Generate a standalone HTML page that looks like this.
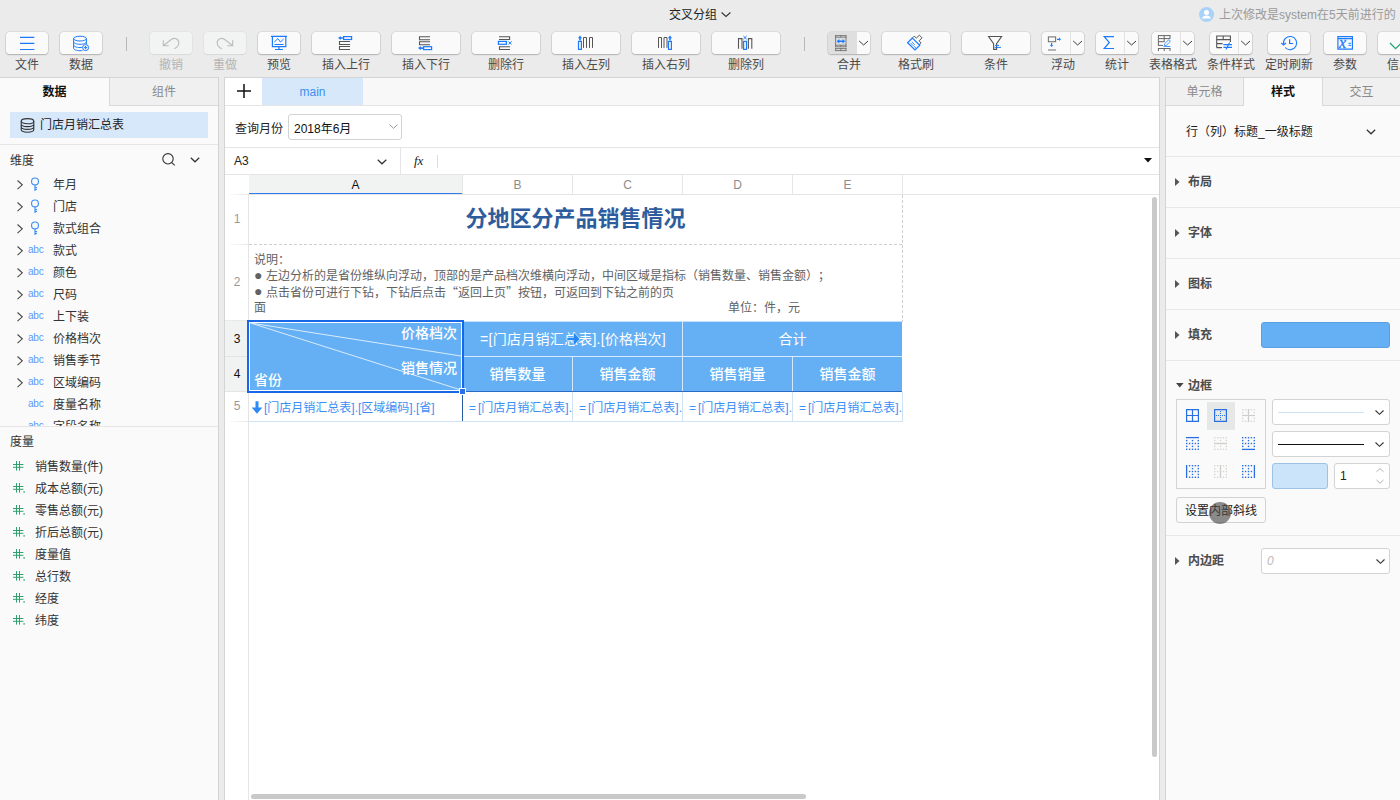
<!DOCTYPE html>
<html lang="zh-CN">
<head>
<meta charset="utf-8">
<title>交叉分组</title>
<style>
*{box-sizing:border-box;margin:0;padding:0}
html,body{width:1400px;height:800px;overflow:hidden}
body{position:relative;text-spacing-trim:space-all;background:#ebebeb;font-family:"Liberation Sans","Noto Sans CJK SC",sans-serif;font-size:12px;color:#333;line-height:16px}
.a{position:absolute}
.t{position:absolute;white-space:nowrap;line-height:16px;height:16px}
.c{text-align:center}
svg{position:absolute;overflow:visible}
/* toolbar */
.btn{position:absolute;top:32px;height:22px;background:#fafafa;border-radius:3.5px;box-shadow:0 0 0 .6px rgba(0,0,0,.11),0 1px 1.5px rgba(0,0,0,.2)}
.btn.dis{background:#f2f3f3;box-shadow:0 0 0 .6px rgba(0,0,0,.05),0 1px 1px rgba(0,0,0,.06)}
.lbl{position:absolute;top:57px;height:16px;line-height:16px;text-align:center;white-space:nowrap;color:#4a4a4a}
.lbl.dis{color:#b4b4b4}
.sep{position:absolute;top:37px;width:1px;height:14px;background:#b8b8b8}
.dd{position:absolute;top:0;right:0;width:14px;height:22px;border-left:1px solid #e3e3e3}
/* panels */
#left{left:0;top:77px;width:219px;height:723px;background:#fafafa;border-top:1px solid #d4d4d4;border-right:1px solid #d4d4d4}
#center{left:224px;top:77px;width:936px;height:723px;background:#fff;border:1px solid #d4d4d4;border-bottom:0}
#right{left:1165px;top:77px;width:235px;height:723px;background:#fafafa;border-top:1px solid #d4d4d4;border-left:1px solid #d4d4d4}
.tab{position:absolute;top:0;height:28px;line-height:29px;text-align:center;background:#f0f0f0;border-bottom:1px solid #d9d9d9;color:#8a8a8a}
.tab.on{background:#fafafa;border-bottom:0;color:#111;font-weight:bold}
.hl{position:absolute;height:1px;background:#e6e6e6}
.vl{position:absolute;width:1px;background:#e6e6e6}
.ti{position:absolute;left:0;width:218px;height:22px}
.ti .nm{position:absolute;left:53px;top:4px;line-height:16px;color:#333;white-space:nowrap}
.ti .abc{position:absolute;left:28px;top:3px;line-height:16px;color:#5b9bff;font-size:10px;letter-spacing:-0.2px}
.mi{position:absolute;left:0;width:218px;height:22px}
.mi .nm{position:absolute;left:35px;top:4px;line-height:16px;color:#333;white-space:nowrap}
.mi .hs{position:absolute;left:13px;top:3px;line-height:16px;color:#2e9e6b;white-space:nowrap}
.sec{position:absolute;left:22px;font-weight:bold;color:#4c4c4c;line-height:16px;height:16px;white-space:nowrap}
.hw{color:#fff;font-weight:500;font-size:14px;line-height:18px;height:18px;text-align:center;white-space:nowrap;position:absolute}
.f5{position:absolute;top:314px;height:30px;line-height:30px;color:#3d8ff2;white-space:nowrap;overflow:hidden}
.nt{color:#626262}
.bul{display:inline-block;width:12px;height:16px;vertical-align:top;font-size:14px;line-height:15px}
.sel{position:absolute;background:#fff;border:1px solid #d3d3d3;border-radius:3px}
</style>
</head>
<body>
<!-- ===== title bar ===== -->
<div class="t" style="left:669px;top:7px;color:#222">交叉分组</div>
<svg style="left:721px;top:12px" width="10" height="5" viewBox="0 0 10 5"><path d="M0.6 0.5 L5 4.4 L9.4 0.5" fill="none" stroke="#333" stroke-width="1.1"/></svg>
<svg style="left:1199px;top:7px" width="15" height="15" viewBox="0 0 15 15"><circle cx="7.5" cy="7.5" r="7.5" fill="#a9d2f9"/><circle cx="7.5" cy="5.6" r="2.5" fill="#fff"/><path d="M3 11.6 C3.4 9.3 5.5 8.4 7.5 8.4 C9.5 8.4 11.6 9.3 12 11.6 Z" fill="#fff"/></svg>
<div class="t" style="left:1219px;top:7px;color:#9a9a9a">上次修改是system在5天前进行的</div>

<!-- ===== toolbar buttons ===== -->
<div class="btn" style="left:6px;width:42px"></div><div class="lbl" style="left:6px;width:42px">文件</div>
<div class="btn" style="left:60px;width:42px"></div><div class="lbl" style="left:60px;width:42px">数据</div>
<div class="sep" style="left:126px"></div>
<div class="btn dis" style="left:150px;width:42px"></div><div class="lbl dis" style="left:150px;width:42px">撤销</div>
<div class="btn dis" style="left:204px;width:42px"></div><div class="lbl dis" style="left:204px;width:42px">重做</div>
<div class="btn" style="left:258px;width:42px"></div><div class="lbl" style="left:258px;width:42px">预览</div>
<div class="btn" style="left:312px;width:68px"></div><div class="lbl" style="left:312px;width:68px">插入上行</div>
<div class="btn" style="left:392px;width:68px"></div><div class="lbl" style="left:392px;width:68px">插入下行</div>
<div class="btn" style="left:472px;width:68px"></div><div class="lbl" style="left:472px;width:68px">删除行</div>
<div class="btn" style="left:552px;width:68px"></div><div class="lbl" style="left:552px;width:68px">插入左列</div>
<div class="btn" style="left:632px;width:68px"></div><div class="lbl" style="left:632px;width:68px">插入右列</div>
<div class="btn" style="left:712px;width:68px"></div><div class="lbl" style="left:712px;width:68px">删除列</div>
<div class="sep" style="left:804px"></div>
<div class="btn" style="left:828px;width:42px;background:linear-gradient(90deg,#dfdfdf 0,#dfdfdf 29px,#fafafa 29px)"></div><div class="lbl" style="left:828px;width:42px">合并</div>
<div class="btn" style="left:882px;width:68px"></div><div class="lbl" style="left:882px;width:68px">格式刷</div>
<div class="btn" style="left:962px;width:68px"></div><div class="lbl" style="left:962px;width:68px">条件</div>
<div class="btn" style="left:1042px;width:42px"><div class="dd"></div></div><div class="lbl" style="left:1042px;width:42px">浮动</div>
<div class="btn" style="left:1096px;width:42px"><div class="dd"></div></div><div class="lbl" style="left:1096px;width:42px">统计</div>
<div class="btn" style="left:1152px;width:42px"><div class="dd"></div></div><div class="lbl" style="left:1143px;width:60px">表格格式</div>
<div class="btn" style="left:1210px;width:42px"><div class="dd"></div></div><div class="lbl" style="left:1201px;width:60px">条件样式</div>
<div class="btn" style="left:1268px;width:42px"></div><div class="lbl" style="left:1259px;width:60px">定时刷新</div>
<div class="btn" style="left:1324px;width:42px"></div><div class="lbl" style="left:1324px;width:42px">参数</div>
<div class="btn" style="left:1378px;width:42px"></div><div class="lbl" style="left:1387px;width:24px">信息</div>
<!-- toolbar icons, drawn in page coordinates -->
<svg style="left:0;top:0" width="1400" height="80" viewBox="0 0 1400 80" fill="none" stroke-linecap="butt">
<g stroke="#1a7bff" stroke-width="1.2">
 <!-- file -->
 <path d="M20 37.3H34.3M20 43.3H34.3M20 49.5H34.3"/>
 <!-- data -->
 <ellipse cx="80" cy="38.6" rx="6.4" ry="2.4" stroke-width="1"/>
 <path stroke-width="1" d="M73.6 38.6V48.2C73.6 49.6 76.3 50.7 80 50.7C81 50.7 81.8 50.6 82.5 50.5M86.4 38.6V44"/>
 <path stroke-width="1" d="M73.6 41.8C73.6 43.2 76.3 44.3 80 44.3C83.7 44.3 86.4 43.2 86.4 41.8M73.6 45C73.6 46.4 76.3 47.5 80 47.5C80.8 47.5 81.6 47.4 82.3 47.3"/>
 <circle cx="85.6" cy="47.6" r="3" fill="#fafafa" stroke-width="1"/>
 <path d="M84 47.6H87.2M85.6 46V49.2" stroke-width="1"/>
 <!-- preview -->
 <path d="M271 36.3H287M272.4 36.3V46.6H285.8V36.3M274.5 44.5H283.5M279 46.6V49.4M275 49.5H283"/>
 <path d="M274.3 42L277.8 38.6L280.5 42L283.6 39" stroke-width="1"/>
 <!-- sigma -->
 <path d="M1114 36.6H1104.2L1109.3 42.5L1104.2 48.5H1114"/>
 <!-- timer refresh -->
 <path d="M1283.6 44.2A6.6 6.6 0 1 1 1285.2 47.5" stroke-width="1.1"/>
 <path d="M1281.2 43L1283.6 45L1286 43" stroke-width="1.1"/>
 <path d="M1289.6 39.2V43.5H1293.2"/>
 <!-- param -->
 <path d="M1337.9 36.6H1352.4V49.2H1337.9ZM1337.9 38.6H1352.4"/>
 <path d="M1348.5 43.3H1351M1348.5 45.4H1351" stroke-width="1"/>
</g>
<text x="1339" y="47.8" font-family="Liberation Serif,serif" font-style="italic" font-size="16" fill="#1a7bff" stroke="#1a7bff" stroke-width=".3">x</text>
<!-- undo / redo -->
<g stroke="#bcbcbc" stroke-width="1.1">
 <path d="M163.3 40.2V45.7H168.8M163.5 45.5L171.6 39.2C174.5 37.4 178.8 38.6 178.8 43C178.8 45.5 176.6 47.6 174.2 48.7"/>
 <path d="M232.7 40.2V45.7H227.2M232.5 45.5L224.4 39.2C221.5 37.4 217.2 38.6 217.2 43C217.2 45.5 219.4 47.6 221.8 48.7"/>
</g>
<!-- insert row above -->
<g stroke="#555" stroke-width="1.1">
 <path d="M350 41.5H339.5V44.5H350M350 46.5H339.5V49.5H350"/>
 <path d="M430 36.7H419.5V39.7H430M430 41.7H419.5V44.7H430"/>
 <path d="M499 36.7H509.6V39.5H499M510 46.7H499.5V49.5H510"/>
 <path d="M583.5 47.9V37.5H586.5V47.9M589.5 47.9V37.5H592.5V47.9" stroke-width="1"/>
 <path d="M658.5 47.9V37.5H661.5V47.9M664 47.9V37.5H667V47.9" stroke-width="1"/>
 <path d="M738.5 48.8V38.6H742V48.8M748.4 48.8V38.6H751.8V48.8"/>
</g>
<g stroke="#1a7bff" stroke-width="1.2">
 <rect x="343.6" y="36.6" width="8" height="2.9"/>
 <rect x="423.6" y="46.7" width="8" height="2.9"/>
 <rect x="498.4" y="41.4" width="8" height="2.9"/>
 <rect x="578.5" y="41.4" width="2.9" height="8"/>
 <rect x="668.5" y="41.4" width="2.9" height="8"/>
 <rect x="743.6" y="41.4" width="2.9" height="8"/>
 <path d="M508.4 41.3L511.6 44.5M511.6 41.3L508.4 44.5M743.4 36L746.6 39.2M746.6 36L743.4 39.2" stroke-width="1"/>
</g>
<g fill="#1a7bff" stroke="none">
 <path d="M338.1 38L340.7 35.9V37.2H342.9V38.8H340.7V40.1Z"/>
 <path d="M418.1 48.1L420.7 46V47.3H422.9V48.9H420.7V50.2Z"/>
 <path d="M580 35.6L582.1 38.2H580.8V40.4H579.2V38.2H577.9Z"/>
 <path d="M670 35.6L672.1 38.2H670.8V40.4H669.2V38.2H667.9Z"/>
</g>
<!-- merge -->
<g stroke="#6a6a6a" stroke-width=".85">
 <path d="M835.2 35.6H846.4M835.2 37.2H846.4M835.2 45.2H846.4M835.2 46.8H846.4M835.2 48.6H846.4M835.2 50.6H846.4M835.6 35.2V47.2M846 35.2V47.2M835.6 48.2V51M846 48.2V51M840.8 35.2V37.2M840.8 45.2V46.8M840.8 48.2V51"/>
</g>
<path d="M836.6 41.3L839.3 39V40.6H842.5V39L845.2 41.3L842.5 43.6V42H839.3V43.6Z" fill="#1a7bff"/>
<!-- dropdown chevrons -->
<g stroke="#3c3c3c" stroke-width="1">
 <path d="M859.2 41L863.6 45L868 41"/>
 <path d="M1073.2 41L1077.6 45L1082 41"/>
 <path d="M1127.2 41L1131.6 45L1136 41"/>
 <path d="M1183.2 41L1187.6 45L1192 41"/>
 <path d="M1241.2 41L1245.6 45L1250 41"/>
</g>
<!-- format brush -->
<path d="M912.4 38L907.6 42.8L915 50L919.8 45.2Z" stroke="#1a7bff" stroke-width="1.2"/>
<path d="M910.6 43L913.4 45.8M911.8 41.8L914.8 44.8M913.8 46L916 48.2" stroke="#1a7bff" stroke-width=".8"/>
<path d="M912.6 37.8L914.2 36.2L916.4 38L919.4 35.2L922 37.8L919.2 40.8L920.8 42.8L919.6 44.6" stroke="#555" stroke-width="1"/>
<!-- filter -->
<path d="M988.6 36.5H1001.6L996.6 43.6V49.4H993.6V43.6Z" stroke="#555" stroke-width="1.1"/>
<path d="M995 45.4H999M994.6 47.4H1001" stroke="#1a7bff" stroke-width="1"/>
<!-- float -->
<rect x="1048.4" y="36.9" width="7.2" height="4.8" stroke="#777" stroke-width="1.1"/>
<path d="M1048 50H1056" stroke="#888" stroke-width="1.2"/>
<g fill="#1a7bff" stroke="none">
 <path d="M1061 39.3L1059 37.6V38.7H1057V39.9H1059V41Z"/>
 <path d="M1051.6 47L1049.9 45H1051V43H1052.2V45H1053.3Z"/>
</g>
<!-- table format -->
<g stroke="#666" stroke-width="1">
 <path d="M1158 35.6H1170.5M1158.4 38.6H1170M1158.4 41.7H1164.4M1158.4 45.4H1163M1158.4 35.5V45.9M1164.2 35.5V41.7M1170 35.5V38.9M1158 48.5H1170.5M1158.4 48.4V51M1164.2 48.4V51M1170 48.4V51"/>
</g>
<path d="M1164.3 45.5L1164.7 43.7L1168.1 40.3A1.15 1.15 0 0 1 1169.8 41.9L1166.3 45.3ZM1163.6 46.5H1170.4" stroke="#4a9bff" stroke-width="1"/>
<!-- cond style -->
<g stroke="#555" stroke-width="1.1">
 <path d="M1216.5 36H1230.6M1216.5 39.6H1230.6M1216.5 43.6H1222.6M1216.5 47.6H1222M1216.7 35.5V47.6M1223.2 36V39.6M1230.4 35.5V42"/>
</g>
<path d="M1223.4 44.6H1232M1223.4 47.4H1232M1229.6 42.6L1226 49.6" stroke="#1a7bff" stroke-width="1.1"/>
<!-- info check -->
<path d="M1390 43L1395.6 48.6L1402 42.4" stroke="#1fa37a" stroke-width="1.3"/>
</svg>

<!-- ===== left panel ===== -->
<div id="left" class="a">
 <div class="tab on" style="left:0;width:110px;border-right:1px solid #d9d9d9">数据</div>
 <div class="tab" style="left:110px;width:108px">组件</div>
 <div class="a" style="left:10px;top:34px;width:198px;height:26px;background:#d8e8fb"></div>
 <svg style="left:20px;top:40px" width="15" height="15" viewBox="0 0 15 15" fill="none" stroke="#333" stroke-width="1.1"><ellipse cx="7.5" cy="3.2" rx="6.3" ry="2.6"/><path d="M1.2 3.2V11.6C1.2 13 4 14.2 7.5 14.2C11 14.2 13.8 13 13.8 11.6V3.2M1.2 6C1.2 7.4 4 8.6 7.5 8.6C11 8.6 13.8 7.4 13.8 6M1.2 8.8C1.2 10.2 4 11.4 7.5 11.4C11 11.4 13.8 10.2 13.8 8.8"/></svg>
 <div class="t" style="left:40px;top:39px;color:#222">门店月销汇总表</div>
 <div class="hl" style="left:0;top:66px;width:218px"></div>
 <div class="t" style="left:10px;top:75px;color:#333">维度</div>
 <svg style="left:162px;top:75px" width="14" height="13" viewBox="0 0 14 13" fill="none" stroke="#333" stroke-width="1.1"><circle cx="6" cy="5.8" r="5.2"/><path d="M9.8 9.6L12.8 12.4"/></svg>
 <svg style="left:190px;top:79px" width="10" height="6" viewBox="0 0 10 6"><path d="M0.8 0.8L5 4.8L9.2 0.8" fill="none" stroke="#333" stroke-width="1.2"/></svg>
 <div class="a" style="left:0;top:94px;width:218px;height:254px;overflow:hidden">
  <div class="ti" style="top:1px"><svg style="left:17px;top:7px" width="6" height="10" viewBox="0 0 6 10"><path d="M0.5 0.5L5.3 4.8L0.5 9.1" fill="none" stroke="#444" stroke-width="1.05"/></svg><svg style="left:30px;top:4px" width="10" height="15" viewBox="0 0 10 15" fill="none" stroke="#3d8ff5" stroke-width="1.15"><circle cx="5" cy="4.4" r="3.45"/><path d="M5 7.9V14M5 10.5H7M5 12.4H7"/></svg><span class="nm">年月</span></div>
  <div class="ti" style="top:23px"><svg style="left:17px;top:7px" width="6" height="10" viewBox="0 0 6 10"><path d="M0.5 0.5L5.3 4.8L0.5 9.1" fill="none" stroke="#444" stroke-width="1.05"/></svg><svg style="left:30px;top:4px" width="10" height="15" viewBox="0 0 10 15" fill="none" stroke="#3d8ff5" stroke-width="1.15"><circle cx="5" cy="4.4" r="3.45"/><path d="M5 7.9V14M5 10.5H7M5 12.4H7"/></svg><span class="nm">门店</span></div>
  <div class="ti" style="top:45px"><svg style="left:17px;top:7px" width="6" height="10" viewBox="0 0 6 10"><path d="M0.5 0.5L5.3 4.8L0.5 9.1" fill="none" stroke="#444" stroke-width="1.05"/></svg><svg style="left:30px;top:4px" width="10" height="15" viewBox="0 0 10 15" fill="none" stroke="#3d8ff5" stroke-width="1.15"><circle cx="5" cy="4.4" r="3.45"/><path d="M5 7.9V14M5 10.5H7M5 12.4H7"/></svg><span class="nm">款式组合</span></div>
  <div class="ti" style="top:67px"><svg style="left:17px;top:7px" width="6" height="10" viewBox="0 0 6 10"><path d="M0.5 0.5L5.3 4.8L0.5 9.1" fill="none" stroke="#444" stroke-width="1.05"/></svg><span class="abc">abc</span><span class="nm">款式</span></div>
  <div class="ti" style="top:89px"><svg style="left:17px;top:7px" width="6" height="10" viewBox="0 0 6 10"><path d="M0.5 0.5L5.3 4.8L0.5 9.1" fill="none" stroke="#444" stroke-width="1.05"/></svg><span class="abc">abc</span><span class="nm">颜色</span></div>
  <div class="ti" style="top:111px"><svg style="left:17px;top:7px" width="6" height="10" viewBox="0 0 6 10"><path d="M0.5 0.5L5.3 4.8L0.5 9.1" fill="none" stroke="#444" stroke-width="1.05"/></svg><span class="abc">abc</span><span class="nm">尺码</span></div>
  <div class="ti" style="top:133px"><svg style="left:17px;top:7px" width="6" height="10" viewBox="0 0 6 10"><path d="M0.5 0.5L5.3 4.8L0.5 9.1" fill="none" stroke="#444" stroke-width="1.05"/></svg><span class="abc">abc</span><span class="nm">上下装</span></div>
  <div class="ti" style="top:155px"><svg style="left:17px;top:7px" width="6" height="10" viewBox="0 0 6 10"><path d="M0.5 0.5L5.3 4.8L0.5 9.1" fill="none" stroke="#444" stroke-width="1.05"/></svg><span class="abc">abc</span><span class="nm">价格档次</span></div>
  <div class="ti" style="top:177px"><svg style="left:17px;top:7px" width="6" height="10" viewBox="0 0 6 10"><path d="M0.5 0.5L5.3 4.8L0.5 9.1" fill="none" stroke="#444" stroke-width="1.05"/></svg><span class="abc">abc</span><span class="nm">销售季节</span></div>
  <div class="ti" style="top:199px"><svg style="left:17px;top:7px" width="6" height="10" viewBox="0 0 6 10"><path d="M0.5 0.5L5.3 4.8L0.5 9.1" fill="none" stroke="#444" stroke-width="1.05"/></svg><span class="abc">abc</span><span class="nm">区域编码</span></div>
  <div class="ti" style="top:221px"><span class="abc">abc</span><span class="nm">度量名称</span></div>
  <div class="ti" style="top:243px"><span class="abc">abc</span><span class="nm">字段名称</span></div>
 </div>
 <div class="hl" style="left:0;top:348px;width:218px"></div>
 <div class="t" style="left:10px;top:356px;color:#333">度量</div>
 <div class="mi" style="top:377px"><svg style="left:13px;top:6px" width="13" height="10" viewBox="0 0 13 10"><path d="M0 3.5H10.4M0 6.3H10.4M3.5 0V9.6M6.5 0V9.6" fill="none" stroke="#2fa06e" stroke-width="1"/></svg><span class="nm">销售数量(件)</span></div>
 <div class="mi" style="top:399px"><svg style="left:13px;top:6px" width="13" height="10" viewBox="0 0 13 10"><path d="M0 3.5H10.4M0 6.3H10.4M3.5 0V9.6M6.5 0V9.6" fill="none" stroke="#2fa06e" stroke-width="1"/><rect x="10.4" y="8.2" width="1.4" height="1.4" fill="#2fa06e"/></svg><span class="nm">成本总额(元)</span></div>
 <div class="mi" style="top:421px"><svg style="left:13px;top:6px" width="13" height="10" viewBox="0 0 13 10"><path d="M0 3.5H10.4M0 6.3H10.4M3.5 0V9.6M6.5 0V9.6" fill="none" stroke="#2fa06e" stroke-width="1"/><rect x="10.4" y="8.2" width="1.4" height="1.4" fill="#2fa06e"/></svg><span class="nm">零售总额(元)</span></div>
 <div class="mi" style="top:443px"><svg style="left:13px;top:6px" width="13" height="10" viewBox="0 0 13 10"><path d="M0 3.5H10.4M0 6.3H10.4M3.5 0V9.6M6.5 0V9.6" fill="none" stroke="#2fa06e" stroke-width="1"/><rect x="10.4" y="8.2" width="1.4" height="1.4" fill="#2fa06e"/></svg><span class="nm">折后总额(元)</span></div>
 <div class="mi" style="top:465px"><svg style="left:13px;top:6px" width="13" height="10" viewBox="0 0 13 10"><path d="M0 3.5H10.4M0 6.3H10.4M3.5 0V9.6M6.5 0V9.6" fill="none" stroke="#2fa06e" stroke-width="1"/><rect x="10.4" y="8.2" width="1.4" height="1.4" fill="#2fa06e"/></svg><span class="nm">度量值</span></div>
 <div class="mi" style="top:487px"><svg style="left:13px;top:6px" width="13" height="10" viewBox="0 0 13 10"><path d="M0 3.5H10.4M0 6.3H10.4M3.5 0V9.6M6.5 0V9.6" fill="none" stroke="#2fa06e" stroke-width="1"/><rect x="10.4" y="8.2" width="1.4" height="1.4" fill="#2fa06e"/></svg><span class="nm">总行数</span></div>
 <div class="mi" style="top:509px"><svg style="left:13px;top:6px" width="13" height="10" viewBox="0 0 13 10"><path d="M0 3.5H10.4M0 6.3H10.4M3.5 0V9.6M6.5 0V9.6" fill="none" stroke="#2fa06e" stroke-width="1"/><rect x="10.4" y="8.2" width="1.4" height="1.4" fill="#2fa06e"/></svg><span class="nm">经度</span></div>
 <div class="mi" style="top:531px"><svg style="left:13px;top:6px" width="13" height="10" viewBox="0 0 13 10"><path d="M0 3.5H10.4M0 6.3H10.4M3.5 0V9.6M6.5 0V9.6" fill="none" stroke="#2fa06e" stroke-width="1"/><rect x="10.4" y="8.2" width="1.4" height="1.4" fill="#2fa06e"/></svg><span class="nm">纬度</span></div>
</div>
<!-- ===== center panel (children in page coordinates) ===== -->
<div id="center" class="a"></div>
<div class="a" style="left:225px;top:78px;width:934px;height:27px;background:#f8f8f8"></div>
<div class="a" style="left:225px;top:78px;width:37px;height:27px;background:#fff"></div>
<svg style="left:237px;top:84px" width="14" height="14" viewBox="0 0 14 14"><path d="M0 7H14M7 0V14" stroke="#111" stroke-width="1.5" fill="none"/></svg>
<div class="a c" style="left:262px;top:78px;width:101px;height:27px;line-height:29px;background:#d8e8fb;color:#3d8ff2">main</div>
<div class="hl" style="left:225px;top:105px;width:934px;background:#e5e5e5"></div>
<div class="t" style="left:235px;top:121px;color:#222">查询月份</div>
<div class="sel" style="left:288px;top:114px;width:114px;height:26px"></div>
<div class="t" style="left:294px;top:121px;color:#111">2018年6月</div>
<svg style="left:389px;top:124px" width="9" height="5" viewBox="0 0 9 5"><path d="M0.5 0.5L4.5 4.3L8.5 0.5" fill="none" stroke="#999" stroke-width="1"/></svg>
<div class="hl" style="left:225px;top:147px;width:934px;background:#e5e5e5"></div>
<div class="t" style="left:234px;top:153px;color:#222">A3</div>
<svg style="left:377px;top:159px" width="10" height="6" viewBox="0 0 10 6"><path d="M0.7 0.7L5 4.8L9.3 0.7" fill="none" stroke="#333" stroke-width="1.2"/></svg>
<div class="vl" style="left:400px;top:148px;height:26px;background:#e5e5e5"></div>
<div class="t" style="left:414px;top:153px;font-family:'Liberation Serif',serif;font-style:italic;font-size:13px;color:#222">fx</div>
<div class="vl" style="left:437px;top:155px;height:13px;background:#dcdcdc"></div>
<svg style="left:1144px;top:158px" width="8" height="5" viewBox="0 0 8 5"><path d="M0 0H8L4 4.6Z" fill="#111"/></svg>
<div class="hl" style="left:225px;top:174px;width:934px;background:#e5e5e5"></div>
<!-- column headers -->
<div class="a" style="left:249px;top:175px;width:213px;height:18px;background:#f1f3f3"></div>
<div class="a" style="left:249px;top:193px;width:213px;height:1px;background:#2f7cf0"></div>
<div class="t c" style="left:249px;top:177px;width:213px;color:#111">A</div>
<div class="t c" style="left:463px;top:177px;width:109px;color:#8c8c8c">B</div>
<div class="t c" style="left:573px;top:177px;width:109px;color:#8c8c8c">C</div>
<div class="t c" style="left:683px;top:177px;width:109px;color:#8c8c8c">D</div>
<div class="t c" style="left:793px;top:177px;width:109px;color:#8c8c8c">E</div>
<div class="vl" style="left:462px;top:175px;height:19px"></div>
<div class="vl" style="left:572px;top:175px;height:19px"></div>
<div class="vl" style="left:682px;top:175px;height:19px"></div>
<div class="vl" style="left:792px;top:175px;height:19px"></div>
<div class="vl" style="left:902px;top:175px;height:19px"></div>
<div class="hl" style="left:249px;top:194px;width:910px;background:#e5e5e5"></div>
<!-- row headers -->
<div class="vl" style="left:248px;top:194px;height:606px;background:#e4e4e4"></div>
<div class="a" style="left:225px;top:321px;width:23px;height:70px;background:#f1f3f3"></div>
<div class="hl" style="left:225px;top:194px;width:23px;background:linear-gradient(90deg,#fff,#e8e8e8)"></div>
<div class="hl" style="left:225px;top:244px;width:23px;background:linear-gradient(90deg,#fff,#e8e8e8)"></div>
<div class="hl" style="left:225px;top:320px;width:23px;background:#e8e8e8"></div>
<div class="hl" style="left:225px;top:356px;width:23px;background:#e4e4e4"></div>
<div class="hl" style="left:225px;top:391px;width:23px;background:#e4e4e4"></div>
<div class="hl" style="left:225px;top:421px;width:23px;background:linear-gradient(90deg,#fff,#e8e8e8)"></div>
<div class="t c" style="left:225px;top:211px;width:24px;color:#999">1</div>
<div class="t c" style="left:225px;top:274px;width:24px;color:#999">2</div>
<div class="t c" style="left:225px;top:331px;width:24px;color:#111">3</div>
<div class="t c" style="left:225px;top:366px;width:24px;color:#111">4</div>
<div class="t c" style="left:225px;top:398px;width:24px;color:#999">5</div>
<!-- page dashed guides -->
<div class="a" style="left:249px;top:244px;width:654px;height:1px;background:repeating-linear-gradient(90deg,#cfcfcf 0,#cfcfcf 3px,transparent 3px,transparent 5px)"></div>
<div class="a" style="left:902px;top:195px;width:1px;height:127px;background:repeating-linear-gradient(180deg,#cfcfcf 0,#cfcfcf 3px,transparent 3px,transparent 5px)"></div>
<!-- row 1 title -->
<div class="a c" style="left:249px;top:204px;width:653px;height:30px;line-height:30px;font-size:22px;font-weight:bold;color:#2d5d9d;white-space:nowrap">分地区分产品销售情况</div>
<!-- row 2 notes -->
<div class="t nt" style="left:254px;top:252px">说明：</div>
<div class="t nt" style="left:254px;top:268px"><span class="bul">●</span>左边分析的是省份维纵向浮动，顶部的是产品档次维横向浮动，中间区域是指标（销售数量、销售金额）；</div>
<div class="t nt" style="left:254px;top:284px"><span class="bul">●</span>点击省份可进行下钻，下钻后点击<span style="font-family:'Noto Sans CJK SC',sans-serif">“</span>返回上页<span style="font-family:'Noto Sans CJK SC',sans-serif">”</span>按钮，可返回到下钻之前的页</div>
<div class="t nt" style="left:254px;top:300px">面</div>
<div class="t nt" style="left:728px;top:300px">单位：件，元</div>
<!-- header band rows 3-4 -->
<div class="a" style="left:464px;top:322px;width:438px;height:69px;background:#65b0f4"></div>
<div class="a" style="left:464px;top:321px;width:438px;height:1px;background:#c4e0fa"></div>
<div class="a" style="left:464px;top:356px;width:438px;height:1px;background:#d6e9fb"></div>
<div class="a" style="left:572px;top:357px;width:1px;height:34px;background:#d6e9fb"></div>
<div class="a" style="left:682px;top:322px;width:1px;height:69px;background:#d6e9fb"></div>
<div class="a" style="left:792px;top:357px;width:1px;height:34px;background:#d6e9fb"></div>
<div class="a" style="left:464px;top:391px;width:438px;height:1px;background:#2a6bc6"></div>
<div class="hw" style="left:464px;top:330px;width:218px;font-weight:normal;letter-spacing:.25px">=[门店月销汇总表].[价格档次]</div>
<div class="hw" style="left:683px;top:330px;width:219px;font-weight:normal">合计</div>
<div class="hw" style="left:463px;top:365px;width:109px">销售数量</div>
<div class="hw" style="left:573px;top:365px;width:109px">销售金额</div>
<div class="hw" style="left:683px;top:365px;width:109px">销售销量</div>
<div class="hw" style="left:793px;top:365px;width:109px">销售金额</div>
<svg style="left:567px;top:332px" width="13" height="14" viewBox="0 0 13 14"><path d="M0.3 5.7H6.7V0.4L12.5 7L6.7 13.6V8.1H0.3Z" fill="#2488f5" stroke="rgba(255,255,255,.7)" stroke-width="1.2" stroke-linejoin="round" paint-order="stroke"/></svg>
<!-- selected merged cell A3:A4 -->
<div class="a" style="left:247px;top:320px;width:217px;height:73px;background:#65b0f4;border:2px solid #1768e8;box-shadow:inset 0 0 0 1px #fff"></div>
<svg style="left:250px;top:323px" width="211" height="67" viewBox="0 0 211 67"><path d="M0.5 0L211 33M0.5 0L211 67" stroke="#d9ebfc" stroke-width="1" fill="none"/></svg>
<div class="hw" style="left:396px;top:324px;width:61px;text-align:right">价格档次</div>
<div class="hw" style="left:396px;top:359px;width:61px;text-align:right">销售情况</div>
<div class="hw" style="left:254px;top:371px;width:40px;text-align:left">省份</div>
<div class="a" style="left:459px;top:388px;width:7px;height:7px;background:#2b70ea;border:1px solid #fff"></div>
<!-- row 5 -->
<div class="a" style="left:462px;top:395px;width:1px;height:27px;background:#2c5ea6"></div>
<div class="a" style="left:249px;top:421px;width:654px;height:1px;background:#cfe3f6"></div>
<div class="a" style="left:572px;top:392px;width:1px;height:29px;background:#cfe3f6"></div>
<div class="a" style="left:682px;top:392px;width:1px;height:29px;background:#cfe3f6"></div>
<div class="a" style="left:792px;top:392px;width:1px;height:29px;background:#cfe3f6"></div>
<div class="a" style="left:902px;top:392px;width:1px;height:30px;background:#cfe3f6"></div>
<svg style="left:251px;top:401px" width="12" height="13" viewBox="0 0 12 12" preserveAspectRatio="none"><path d="M4.5 0.3H7.5V6H11.3L6 11.8L0.7 6H4.5Z" fill="#2b8af5"/></svg>
<div class="f5" style="left:264px;top:393px;width:196px">[门店月销汇总表].[区域编码].[省]</div>
<div class="f5" style="left:469px;top:393px;width:103px"><span style="letter-spacing:2px">=</span>[门店月销汇总表].</div>
<div class="f5" style="left:579px;top:393px;width:103px"><span style="letter-spacing:2px">=</span>[门店月销汇总表].</div>
<div class="f5" style="left:689px;top:393px;width:103px"><span style="letter-spacing:2px">=</span>[门店月销汇总表].</div>
<div class="f5" style="left:799px;top:393px;width:103px"><span style="letter-spacing:2px">=</span>[门店月销汇总表].</div>
<!-- scrollbars -->
<div class="a" style="left:1152px;top:197px;width:5px;height:560px;background:#c9c9c9;border-radius:3px"></div>
<div class="a" style="left:251px;top:794px;width:555px;height:5px;background:#c9c9c9;border-radius:3px"></div>

<!-- ===== right panel (children in page coordinates) ===== -->
<div id="right" class="a"></div>
<div class="tab" style="left:1166px;top:78px;width:78px;border-right:1px solid #d9d9d9">单元格</div>
<div class="tab on" style="left:1244px;top:78px;width:78px">样式</div>
<div class="tab" style="left:1322px;top:78px;width:78px;border-left:1px solid #d9d9d9">交互</div>
<div class="t" style="left:1186px;top:124px;color:#222">行（列）标题_一级标题</div>
<svg style="left:1366px;top:129px" width="10" height="6" viewBox="0 0 10 6"><path d="M0.8 0.8L5 4.8L9.2 0.8" fill="none" stroke="#333" stroke-width="1.2"/></svg>
<div class="hl" style="left:1166px;top:156px;width:234px;background:#e8e8e8"></div>
<div class="hl" style="left:1166px;top:207px;width:234px;background:#e8e8e8"></div>
<div class="hl" style="left:1166px;top:258px;width:234px;background:#e8e8e8"></div>
<div class="hl" style="left:1166px;top:309px;width:234px;background:#e8e8e8"></div>
<div class="hl" style="left:1166px;top:360px;width:234px;background:#e8e8e8"></div>
<div class="hl" style="left:1166px;top:535px;width:234px;background:#e8e8e8"></div>
<svg style="left:1175px;top:177.5px" width="5" height="8" viewBox="0 0 5 8"><path d="M0 0L4.5 4L0 8Z" fill="#555"/></svg>
<div class="sec" style="left:1188px;top:174px">布局</div>
<svg style="left:1175px;top:228.5px" width="5" height="8" viewBox="0 0 5 8"><path d="M0 0L4.5 4L0 8Z" fill="#555"/></svg>
<div class="sec" style="left:1188px;top:225px">字体</div>
<svg style="left:1175px;top:279.5px" width="5" height="8" viewBox="0 0 5 8"><path d="M0 0L4.5 4L0 8Z" fill="#555"/></svg>
<div class="sec" style="left:1188px;top:276px">图标</div>
<svg style="left:1175px;top:330.5px" width="5" height="8" viewBox="0 0 5 8"><path d="M0 0L4.5 4L0 8Z" fill="#555"/></svg>
<div class="sec" style="left:1188px;top:327px">填充</div>
<div class="a" style="left:1261px;top:322px;width:129px;height:26px;background:#65b0f4;border:1px solid #5a9fdf;border-radius:3px"></div>
<svg style="left:1176px;top:383px" width="8" height="5" viewBox="0 0 8 5"><path d="M0 0H7.6L3.8 4.4Z" fill="#444"/></svg>
<div class="sec" style="left:1188px;top:378px">边框</div>
<div class="a" style="left:1176px;top:399px;width:90px;height:90px;border:1px solid #d4d4d4;background:#fafafa"></div>
<div class="a" style="left:1207px;top:402px;width:28px;height:28px;background:#e6e8e8"></div>
<svg style="left:0;top:395px" width="1400" height="100" viewBox="0 395 1400 100" fill="none"><path d="M1186.6 409.6h11.8v11.8h-11.8zM1186.6 415.5h11.8M1192.5 409.6v11.8" stroke="#2a6fe2" stroke-width="1.2"/><path d="M1214.6 409.6h11.8v11.8h-11.8z" stroke="#2a6fe2" stroke-width="1.2"/><rect x="1216.0" y="415.0" width="1.0" height="1.0" fill="#2a6fe2"/><rect x="1220.0" y="411.0" width="1.0" height="1.0" fill="#2a6fe2"/><rect x="1218.0" y="415.0" width="1.0" height="1.0" fill="#2a6fe2"/><rect x="1220.0" y="413.0" width="1.0" height="1.0" fill="#2a6fe2"/><rect x="1220.0" y="415.0" width="1.0" height="1.0" fill="#2a6fe2"/><rect x="1222.0" y="415.0" width="1.0" height="1.0" fill="#2a6fe2"/><rect x="1220.0" y="417.0" width="1.0" height="1.0" fill="#2a6fe2"/><rect x="1224.0" y="415.0" width="1.0" height="1.0" fill="#2a6fe2"/><rect x="1220.0" y="419.0" width="1.0" height="1.0" fill="#2a6fe2"/><rect x="1242.0" y="409.0" width="1.4" height="1.4" fill="#d8d8d0"/><rect x="1242.0" y="411.9" width="1.4" height="1.4" fill="#d8d8d0"/><rect x="1242.0" y="414.8" width="1.4" height="1.4" fill="#d8d8d0"/><rect x="1242.0" y="417.7" width="1.4" height="1.4" fill="#d8d8d0"/><rect x="1242.0" y="420.6" width="1.4" height="1.4" fill="#d8d8d0"/><rect x="1244.9" y="409.0" width="1.4" height="1.4" fill="#d8d8d0"/><rect x="1244.9" y="414.8" width="1.4" height="1.4" fill="#d8d8d0"/><rect x="1244.9" y="420.6" width="1.4" height="1.4" fill="#d8d8d0"/><rect x="1247.8" y="409.0" width="1.4" height="1.4" fill="#d8d8d0"/><rect x="1247.8" y="411.9" width="1.4" height="1.4" fill="#d8d8d0"/><rect x="1247.8" y="414.8" width="1.4" height="1.4" fill="#d8d8d0"/><rect x="1247.8" y="417.7" width="1.4" height="1.4" fill="#d8d8d0"/><rect x="1247.8" y="420.6" width="1.4" height="1.4" fill="#d8d8d0"/><rect x="1250.7" y="409.0" width="1.4" height="1.4" fill="#d8d8d0"/><rect x="1250.7" y="414.8" width="1.4" height="1.4" fill="#d8d8d0"/><rect x="1250.7" y="420.6" width="1.4" height="1.4" fill="#d8d8d0"/><rect x="1253.6" y="409.0" width="1.4" height="1.4" fill="#d8d8d0"/><rect x="1253.6" y="411.9" width="1.4" height="1.4" fill="#d8d8d0"/><rect x="1253.6" y="414.8" width="1.4" height="1.4" fill="#d8d8d0"/><rect x="1253.6" y="417.7" width="1.4" height="1.4" fill="#d8d8d0"/><rect x="1253.6" y="420.6" width="1.4" height="1.4" fill="#d8d8d0"/><path d="M1242 415.5h13M1248.5 409v13" stroke="#cdcdcd" stroke-width="1.2"/><rect x="1186.0" y="439.9" width="1.4" height="1.4" fill="#2a6fe2"/><rect x="1186.0" y="442.8" width="1.4" height="1.4" fill="#2a6fe2"/><rect x="1186.0" y="445.7" width="1.4" height="1.4" fill="#2a6fe2"/><rect x="1186.0" y="448.6" width="1.4" height="1.4" fill="#2a6fe2"/><rect x="1188.9" y="442.8" width="1.4" height="1.4" fill="#2a6fe2"/><rect x="1188.9" y="448.6" width="1.4" height="1.4" fill="#2a6fe2"/><rect x="1191.8" y="439.9" width="1.4" height="1.4" fill="#2a6fe2"/><rect x="1191.8" y="442.8" width="1.4" height="1.4" fill="#2a6fe2"/><rect x="1191.8" y="445.7" width="1.4" height="1.4" fill="#2a6fe2"/><rect x="1191.8" y="448.6" width="1.4" height="1.4" fill="#2a6fe2"/><rect x="1194.7" y="442.8" width="1.4" height="1.4" fill="#2a6fe2"/><rect x="1194.7" y="448.6" width="1.4" height="1.4" fill="#2a6fe2"/><rect x="1197.6" y="439.9" width="1.4" height="1.4" fill="#2a6fe2"/><rect x="1197.6" y="442.8" width="1.4" height="1.4" fill="#2a6fe2"/><rect x="1197.6" y="445.7" width="1.4" height="1.4" fill="#2a6fe2"/><rect x="1197.6" y="448.6" width="1.4" height="1.4" fill="#2a6fe2"/><path d="M1186 437.6h13" stroke="#2a6fe2" stroke-width="1.3"/><rect x="1214.0" y="437.0" width="1.4" height="1.4" fill="#d8d8d0"/><rect x="1214.0" y="439.9" width="1.4" height="1.4" fill="#d8d8d0"/><rect x="1214.0" y="442.8" width="1.4" height="1.4" fill="#d8d8d0"/><rect x="1214.0" y="445.7" width="1.4" height="1.4" fill="#d8d8d0"/><rect x="1214.0" y="448.6" width="1.4" height="1.4" fill="#d8d8d0"/><rect x="1216.9" y="437.0" width="1.4" height="1.4" fill="#d8d8d0"/><rect x="1216.9" y="442.8" width="1.4" height="1.4" fill="#d8d8d0"/><rect x="1216.9" y="448.6" width="1.4" height="1.4" fill="#d8d8d0"/><rect x="1219.8" y="437.0" width="1.4" height="1.4" fill="#d8d8d0"/><rect x="1219.8" y="439.9" width="1.4" height="1.4" fill="#d8d8d0"/><rect x="1219.8" y="442.8" width="1.4" height="1.4" fill="#d8d8d0"/><rect x="1219.8" y="445.7" width="1.4" height="1.4" fill="#d8d8d0"/><rect x="1219.8" y="448.6" width="1.4" height="1.4" fill="#d8d8d0"/><rect x="1222.7" y="437.0" width="1.4" height="1.4" fill="#d8d8d0"/><rect x="1222.7" y="442.8" width="1.4" height="1.4" fill="#d8d8d0"/><rect x="1222.7" y="448.6" width="1.4" height="1.4" fill="#d8d8d0"/><rect x="1225.6" y="437.0" width="1.4" height="1.4" fill="#d8d8d0"/><rect x="1225.6" y="439.9" width="1.4" height="1.4" fill="#d8d8d0"/><rect x="1225.6" y="442.8" width="1.4" height="1.4" fill="#d8d8d0"/><rect x="1225.6" y="445.7" width="1.4" height="1.4" fill="#d8d8d0"/><rect x="1225.6" y="448.6" width="1.4" height="1.4" fill="#d8d8d0"/><path d="M1214 443.5h13" stroke="#cdcdcd" stroke-width="1.2"/><rect x="1242.0" y="437.0" width="1.4" height="1.4" fill="#2a6fe2"/><rect x="1242.0" y="439.9" width="1.4" height="1.4" fill="#2a6fe2"/><rect x="1242.0" y="442.8" width="1.4" height="1.4" fill="#2a6fe2"/><rect x="1242.0" y="445.7" width="1.4" height="1.4" fill="#2a6fe2"/><rect x="1244.9" y="437.0" width="1.4" height="1.4" fill="#2a6fe2"/><rect x="1244.9" y="442.8" width="1.4" height="1.4" fill="#2a6fe2"/><rect x="1247.8" y="437.0" width="1.4" height="1.4" fill="#2a6fe2"/><rect x="1247.8" y="439.9" width="1.4" height="1.4" fill="#2a6fe2"/><rect x="1247.8" y="442.8" width="1.4" height="1.4" fill="#2a6fe2"/><rect x="1247.8" y="445.7" width="1.4" height="1.4" fill="#2a6fe2"/><rect x="1250.7" y="437.0" width="1.4" height="1.4" fill="#2a6fe2"/><rect x="1250.7" y="442.8" width="1.4" height="1.4" fill="#2a6fe2"/><rect x="1253.6" y="437.0" width="1.4" height="1.4" fill="#2a6fe2"/><rect x="1253.6" y="439.9" width="1.4" height="1.4" fill="#2a6fe2"/><rect x="1253.6" y="442.8" width="1.4" height="1.4" fill="#2a6fe2"/><rect x="1253.6" y="445.7" width="1.4" height="1.4" fill="#2a6fe2"/><path d="M1242 449.4h13" stroke="#2a6fe2" stroke-width="1.3"/><rect x="1188.9" y="465.0" width="1.4" height="1.4" fill="#2a6fe2"/><rect x="1188.9" y="470.8" width="1.4" height="1.4" fill="#2a6fe2"/><rect x="1188.9" y="476.6" width="1.4" height="1.4" fill="#2a6fe2"/><rect x="1191.8" y="465.0" width="1.4" height="1.4" fill="#2a6fe2"/><rect x="1191.8" y="467.9" width="1.4" height="1.4" fill="#2a6fe2"/><rect x="1191.8" y="470.8" width="1.4" height="1.4" fill="#2a6fe2"/><rect x="1191.8" y="473.7" width="1.4" height="1.4" fill="#2a6fe2"/><rect x="1191.8" y="476.6" width="1.4" height="1.4" fill="#2a6fe2"/><rect x="1194.7" y="465.0" width="1.4" height="1.4" fill="#2a6fe2"/><rect x="1194.7" y="470.8" width="1.4" height="1.4" fill="#2a6fe2"/><rect x="1194.7" y="476.6" width="1.4" height="1.4" fill="#2a6fe2"/><rect x="1197.6" y="465.0" width="1.4" height="1.4" fill="#2a6fe2"/><rect x="1197.6" y="467.9" width="1.4" height="1.4" fill="#2a6fe2"/><rect x="1197.6" y="470.8" width="1.4" height="1.4" fill="#2a6fe2"/><rect x="1197.6" y="473.7" width="1.4" height="1.4" fill="#2a6fe2"/><rect x="1197.6" y="476.6" width="1.4" height="1.4" fill="#2a6fe2"/><path d="M1186.6 465v13" stroke="#2a6fe2" stroke-width="1.3"/><rect x="1214.0" y="465.0" width="1.4" height="1.4" fill="#d8d8d0"/><rect x="1214.0" y="467.9" width="1.4" height="1.4" fill="#d8d8d0"/><rect x="1214.0" y="470.8" width="1.4" height="1.4" fill="#d8d8d0"/><rect x="1214.0" y="473.7" width="1.4" height="1.4" fill="#d8d8d0"/><rect x="1214.0" y="476.6" width="1.4" height="1.4" fill="#d8d8d0"/><rect x="1216.9" y="465.0" width="1.4" height="1.4" fill="#d8d8d0"/><rect x="1216.9" y="470.8" width="1.4" height="1.4" fill="#d8d8d0"/><rect x="1216.9" y="476.6" width="1.4" height="1.4" fill="#d8d8d0"/><rect x="1219.8" y="465.0" width="1.4" height="1.4" fill="#d8d8d0"/><rect x="1219.8" y="467.9" width="1.4" height="1.4" fill="#d8d8d0"/><rect x="1219.8" y="470.8" width="1.4" height="1.4" fill="#d8d8d0"/><rect x="1219.8" y="473.7" width="1.4" height="1.4" fill="#d8d8d0"/><rect x="1219.8" y="476.6" width="1.4" height="1.4" fill="#d8d8d0"/><rect x="1222.7" y="465.0" width="1.4" height="1.4" fill="#d8d8d0"/><rect x="1222.7" y="470.8" width="1.4" height="1.4" fill="#d8d8d0"/><rect x="1222.7" y="476.6" width="1.4" height="1.4" fill="#d8d8d0"/><rect x="1225.6" y="465.0" width="1.4" height="1.4" fill="#d8d8d0"/><rect x="1225.6" y="467.9" width="1.4" height="1.4" fill="#d8d8d0"/><rect x="1225.6" y="470.8" width="1.4" height="1.4" fill="#d8d8d0"/><rect x="1225.6" y="473.7" width="1.4" height="1.4" fill="#d8d8d0"/><rect x="1225.6" y="476.6" width="1.4" height="1.4" fill="#d8d8d0"/><path d="M1220.5 465v13" stroke="#cdcdcd" stroke-width="1.2"/><rect x="1242.0" y="465.0" width="1.4" height="1.4" fill="#2a6fe2"/><rect x="1242.0" y="467.9" width="1.4" height="1.4" fill="#2a6fe2"/><rect x="1242.0" y="470.8" width="1.4" height="1.4" fill="#2a6fe2"/><rect x="1242.0" y="473.7" width="1.4" height="1.4" fill="#2a6fe2"/><rect x="1242.0" y="476.6" width="1.4" height="1.4" fill="#2a6fe2"/><rect x="1244.9" y="465.0" width="1.4" height="1.4" fill="#2a6fe2"/><rect x="1244.9" y="470.8" width="1.4" height="1.4" fill="#2a6fe2"/><rect x="1244.9" y="476.6" width="1.4" height="1.4" fill="#2a6fe2"/><rect x="1247.8" y="465.0" width="1.4" height="1.4" fill="#2a6fe2"/><rect x="1247.8" y="467.9" width="1.4" height="1.4" fill="#2a6fe2"/><rect x="1247.8" y="470.8" width="1.4" height="1.4" fill="#2a6fe2"/><rect x="1247.8" y="473.7" width="1.4" height="1.4" fill="#2a6fe2"/><rect x="1247.8" y="476.6" width="1.4" height="1.4" fill="#2a6fe2"/><rect x="1250.7" y="465.0" width="1.4" height="1.4" fill="#2a6fe2"/><rect x="1250.7" y="470.8" width="1.4" height="1.4" fill="#2a6fe2"/><rect x="1250.7" y="476.6" width="1.4" height="1.4" fill="#2a6fe2"/><path d="M1254.4 465v13" stroke="#2a6fe2" stroke-width="1.3"/></svg>
<div class="sel" style="left:1272px;top:399px;width:118px;height:26px"></div>
<div class="hl" style="left:1278px;top:412px;width:86px;background:#cfe3f6"></div>
<svg style="left:1375px;top:410px" width="9" height="5" viewBox="0 0 9 5"><path d="M0.5 0.5L4.5 4.3L8.5 0.5" fill="none" stroke="#333" stroke-width="1.1"/></svg>
<div class="sel" style="left:1272px;top:431px;width:118px;height:26px"></div>
<div class="hl" style="left:1278px;top:444px;width:86px;background:#111"></div>
<svg style="left:1375px;top:442px" width="9" height="5" viewBox="0 0 9 5"><path d="M0.5 0.5L4.5 4.3L8.5 0.5" fill="none" stroke="#333" stroke-width="1.1"/></svg>
<div class="a" style="left:1272px;top:463px;width:56px;height:26px;background:#cbe4f9;border:1px solid #9cc3e6;border-radius:3px"></div>
<div class="sel" style="left:1334px;top:463px;width:56px;height:26px"></div>
<div class="t" style="left:1340px;top:468px;color:#222">1</div>
<svg style="left:1376px;top:468px" width="8" height="16" viewBox="0 0 8 16" fill="none" stroke="#b2b2b2" stroke-width="1"><path d="M0.5 3.7L4 0.6L7.5 3.7M0.5 12L4 15.2L7.5 12"/></svg>
<div class="sel c" style="left:1176px;top:497px;width:90px;height:26px;line-height:26px;color:#222;background:#fafafa">设置内部斜线</div>
<div class="a" style="left:1208.5px;top:502px;width:22px;height:22px;border-radius:11px;background:radial-gradient(circle,rgba(70,70,70,.62) 0,rgba(70,70,70,.62) 78%,rgba(120,120,120,.42) 84%,rgba(120,120,120,.42) 100%)"></div>
<svg style="left:1175px;top:556.5px" width="5" height="8" viewBox="0 0 5 8"><path d="M0 0L4.5 4L0 8Z" fill="#555"/></svg>
<div class="sec" style="left:1188px;top:553px">内边距</div>
<div class="sel" style="left:1261px;top:548px;width:129px;height:26px"></div>
<div class="t" style="left:1267px;top:553px;color:#bbb;font-style:italic">0</div>
<svg style="left:1376px;top:559px" width="9" height="5" viewBox="0 0 9 5"><path d="M0.5 0.5L4.5 4.3L8.5 0.5" fill="none" stroke="#333" stroke-width="1.1"/></svg>
</body>
</html>
